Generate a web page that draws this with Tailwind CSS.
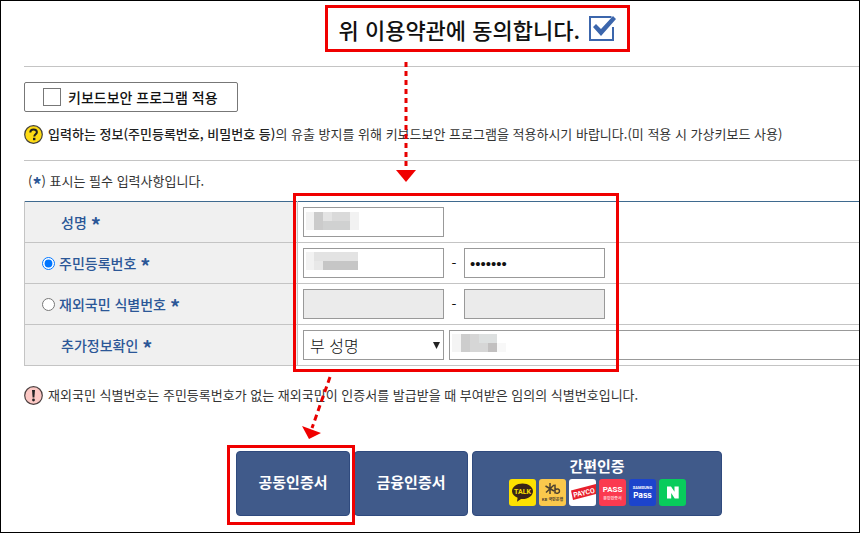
<!DOCTYPE html>
<html lang="ko">
<head>
    <meta charset="UTF-8">
    <meta name="viewport" content="width=device-width, initial-scale=1.0">
    <title>인증서 발급 신청</title>
    <script src="https://cdn.jsdelivr.net/npm/@tailwindcss/browser@4"></script>
    <style>
        body {
            font-family: "Noto Sans CJK KR", "Noto Sans", sans-serif;
        }
    </style>
</head>
<body class="bg-white text-[#333]">
    <div class="min-h-screen border border-black overflow-hidden">
        <form class="relative ml-[23px] -mr-[75px]">
            <!-- Terms agreement -->
            <div class="flex justify-center pt-1 pr-1 pb-[14px] border-b border-[#c4c4c4]">
                <label for="agree" class="flex items-center justify-between w-[305px] h-[47px] px-[11px] border-3 border-[#f00000] text-[22px] leading-8 font-medium text-[#111]">
                    <span>위 이용약관에 동의합니다.</span>
                    <span class="relative w-[27px] h-[26px]">
                        <input type="checkbox" id="agree" checked class="appearance-none block w-[25px] h-[25px] border-2 border-[#3c66ac] bg-white">
                        <svg class="absolute inset-0 pointer-events-none" width="28" height="26" viewBox="0 0 28 26">
                            <path d="M22.500 0h4v11h-4z" fill="#fff"/>
                            <path d="M4 11l3-3 5 5L24 0l3 3-15 17z" fill="#3c66ac"/>
                        </svg>
                    </span>
                </label>
            </div>

            <!-- Keyboard security -->
            <div class="pt-[15px] pb-4 border-b border-[#c4c4c4]">
                <label for="keyboard" class="flex items-center w-[214px] h-[30px] pl-[18px] gap-[7px] border border-[#777] rounded-xs text-sm font-medium text-[#111]">
                    <input type="checkbox" id="keyboard" class="appearance-none w-[18px] h-[18px] border border-[#777] bg-white">
                    키보드보안 프로그램 적용
                </label>
                <p class="flex items-center gap-[5px] mt-3 text-[13px] leading-5">
                    <svg width="19" height="19" viewBox="0 0 19 19" class="shrink-0">
                        <circle cx="9.5" cy="9.5" r="8.8" fill="#ffdc14" stroke="#44403a" stroke-width="1.2"/>
                        <path d="M6.3 7.6c0-2 1.4-3.2 3.3-3.2s3.3 1.100 3.300 2.800c0 2-2.600 2.300-2.600 4.300" fill="none" stroke="#222" stroke-width="2"/>
                        <rect x="9" y="12.800" width="2.400" height="2.400" fill="#222"/>
                    </svg>
                    <span class="whitespace-nowrap"><strong class="font-medium text-[#222]">입력하는 정보(주민등록번호, 비밀번호 등)</strong>의 유출 방지를 위해 키보드보안 프로그램을 적용하시기 바랍니다.(미 적용 시 가상키보드 사용)</span>
                </p>
            </div>

            <p class="pt-[10px] pb-[10px] pl-1 text-[13px] leading-5">(<b class="inline-block h-5 align-top text-lg leading-[26px] text-[#2b5797]">*</b>) 표시는 필수 입력사항입니다.</p>

            <!-- Applicant information -->
            <div class="relative">
                <div class="h-px bg-[#3f6a8f]"></div>
                <table class="w-full -mt-px border-collapse">
                    <tbody>
                        <tr class="h-[41px] border-y border-t-[#3f6a8f] border-b-[#c4c4c4]">
                            <th scope="row" class="w-[273px] pl-9 bg-[#f0f0f0] border-x border-[#c4c4c4] text-left text-sm leading-5 font-medium text-[#2b5797]">
                                <label for="name">성명 <b class="inline-block h-5 align-top text-xl leading-[26px]">*</b></label>
                            </th>
                            <td class="pl-[5px]">
                                <div class="relative flex">
                                    <input type="text" id="name" class="w-[141px] h-[30px] px-1 border border-[#999]">
                                    <svg class="absolute left-[3px] top-[5px]" width="53" height="18" viewBox="0 0 53 18">
                                        <rect width="53" height="18" fill="#f2f2f2"/>
                                        <rect x="8" width="36" height="18" fill="#dadada"/>
                                        <rect x="8" width="9" height="18" fill="#cbcbcb"/>
                                        <rect x="17" width="9" height="9" fill="#e4e4e4"/>
                                        <rect x="17" y="9" width="27" height="9" fill="#d0d1d1"/>
                                    </svg>
                                </div>
                            </td>
                        </tr>
                        <tr class="h-[41px] border-b border-[#c4c4c4]">
                            <th scope="row" class="pl-[17px] bg-[#f0f0f0] border-x border-[#c4c4c4] text-left text-sm leading-5 font-medium text-[#2b5797]">
                                <div class="flex items-center gap-1">
                                    <input type="radio" name="idtype" id="resident" checked class="w-[13px] h-[13px]">
                                    <label for="resident">주민등록번호 <b class="inline-block h-5 align-top text-xl leading-[26px]">*</b></label>
                                </div>
                            </th>
                            <td class="pl-[5px]">
                                <div class="relative flex items-center">
                                    <input type="text" aria-label="주민등록번호 앞자리" class="w-[141px] h-[30px] px-1 border border-[#999]">
                                    <span class="w-5 text-center text-sm text-[#111]">-</span>
                                    <input type="password" aria-label="주민등록번호 뒷자리" value="0000000" class="w-[141px] h-[30px] px-[5px] border border-[#999] font-['Liberation_Sans'] text-[15px] text-[#111]">
                                    <svg class="absolute left-[3px] top-1" width="52" height="18" viewBox="0 0 52 18">
                                        <rect width="52" height="18" fill="#f2f2f2"/>
                                        <rect x="8" width="44" height="9" fill="#e3e3e3"/>
                                        <rect x="8" y="9" width="9" height="9" fill="#e8e8e8"/>
                                        <rect x="17" y="9" width="35" height="9" fill="#c6c6c6"/>
                                    </svg>
                                </div>
                            </td>
                        </tr>
                        <tr class="h-[41px] border-b border-[#c4c4c4]">
                            <th scope="row" class="pl-[17px] bg-[#f0f0f0] border-x border-[#c4c4c4] text-left text-sm leading-5 font-medium text-[#2b5797]">
                                <div class="flex items-center gap-1">
                                    <input type="radio" name="idtype" id="overseas" class="w-[13px] h-[13px]">
                                    <label for="overseas">재외국민 식별번호 <b class="inline-block h-5 align-top text-xl leading-[26px]">*</b></label>
                                </div>
                            </th>
                            <td class="pl-[5px]">
                                <div class="flex items-center">
                                    <input type="text" aria-label="식별번호 앞자리" disabled class="w-[141px] h-[30px] border border-[#999] bg-[#ebebeb]">
                                    <span class="w-5 text-center text-sm text-[#111]">-</span>
                                    <input type="password" aria-label="식별번호 뒷자리" disabled class="w-[141px] h-[30px] border border-[#999] bg-[#ebebeb]">
                                </div>
                            </td>
                        </tr>
                        <tr class="h-[41px] border-b border-[#c4c4c4]">
                            <th scope="row" class="pl-9 bg-[#f0f0f0] border-x border-[#c4c4c4] text-left text-sm leading-5 font-medium text-[#2b5797]">
                                <label for="extra">추가정보확인 <b class="inline-block h-5 align-top text-xl leading-[26px]">*</b></label>
                            </th>
                            <td class="pl-[5px]">
                                <div class="relative flex gap-[5px]">
                                    <select id="extra" class="appearance-none w-[141px] h-[30px] px-[6px] border border-[#999] bg-white text-base leading-6 font-light text-[#111]">
                                        <option>부 성명</option>
                                        <option>모 성명</option>
                                    </select>
                                    <svg class="absolute left-[130px] top-3 pointer-events-none" width="7" height="7" viewBox="0 0 7 7">
                                        <path d="M0 0h7L3.500 7z" fill="#222"/>
                                    </svg>
                                    <input type="text" aria-label="추가정보" class="grow h-[30px] border border-[#999]">
                                    <svg class="absolute left-[149px] top-1" width="54" height="18" viewBox="0 0 54 18">
                                        <rect width="45" height="18" fill="#f4f4f4"/>
                                        <rect x="9" width="36" height="18" fill="#d6d6d6"/>
                                        <rect x="9" width="9" height="18" fill="#cdcdcd"/>
                                        <rect x="27" width="18" height="9" fill="#dde0e0"/>
                                        <rect x="36" y="9" width="9" height="9" fill="#c2c0c0"/>
                                        <rect x="45" y="9" width="9" height="9" fill="#f8f8f8"/>
                                    </svg>
                                </div>
                            </td>
                        </tr>
                    </tbody>
                </table>
                <div class="absolute left-[269px] -top-2 w-[326px] h-[179px] border-3 border-[#f00000] pointer-events-none"></div>
            </div>

            <p class="flex items-center gap-[5px] mt-[19px] text-[13px] leading-5 whitespace-nowrap">
                <svg width="19" height="19" viewBox="0 0 19 19" class="shrink-0">
                    <circle cx="9.5" cy="9.5" r="8.8" fill="#fcc8c4" stroke="#4c4040" stroke-width="1.2"/>
                    <path d="M8 4h3l-.6 7.500H8.600z" fill="#222"/>
                    <circle cx="9.5" cy="14" r="1.400" fill="#222"/>
                </svg>
                재외국민 식별번호는 주민등록번호가 없는 재외국민이 인증서를 발급받을 때 부여받은 임의의 식별번호입니다.
            </p>

            <!-- Certificate buttons -->
            <div class="flex justify-center gap-1 mt-[46px] pb-4 text-[15px] leading-5 font-bold text-white">
                <div class="relative">
                    <button type="button" class="w-[114px] h-[65px] pb-1 border border-[#2f4a7e] rounded-sm bg-[#405a8a]">공동인증서</button>
                    <div class="absolute -left-[9px] -top-[6px] z-10 w-[128px] h-20 border-3 border-[#f00000] pointer-events-none"></div>
                </div>
                <button type="button" class="w-[114px] h-[65px] pb-1 border border-[#2f4a7e] rounded-sm bg-[#405a8a]">금융인증서</button>
                <button type="button" class="flex flex-col items-center w-[250px] h-[65px] pt-1 gap-[3px] border border-[#2f4a7e] rounded-sm bg-[#405a8a]">
                    간편인증
                    <span class="flex gap-[3px]">
                        <svg width="27" height="27" viewBox="0 0 27 27">
                            <rect width="27" height="27" rx="3" fill="#fce000"/>
                            <path d="M13.500 4.500c5.800 0 10.500 3.400 10.500 7.800s-4.700 7.800-10.500 7.800l-1.500-.1-4 2.800 .6-4C5.200 17.500 3 15 3 12.300c0-4.400 4.700-7.800 10.500-7.800z" fill="#3a2418"/>
                            <text x="13.500" y="15" text-anchor="middle" font-family="Roboto" font-weight="bold" font-size="7" fill="#fce000">TALK</text>
                        </svg>
                        <svg width="27" height="27" viewBox="0 0 27 27">
                            <rect width="27" height="27" rx="3" fill="#fac84c"/>
                            <path d="M11 4v11M6.500 7l8.500 5M7 13.500L15 6M16 5.500v9M16 11c2-2 4.500-1 4.500 1s-2.500 3.200-4.500 1.500" fill="none" stroke="#4c4030" stroke-width="1.500"/>
                            <text x="13.500" y="22" text-anchor="middle" font-family="Noto Sans CJK KR" font-weight="bold" font-size="4" fill="#4c4030">KB 국민은행</text>
                        </svg>
                        <svg width="27" height="27" viewBox="0 0 27 27">
                            <rect width="27" height="27" rx="3" fill="#fff"/>
                            <path d="M2 11.500L27 5v10L4 21z" fill="#e8202c"/>
                            <text x="5" y="18.500" transform="rotate(-13 5 18.500)" font-family="Roboto" font-weight="bold" font-size="7" fill="#fff">PAYCO</text>
                        </svg>
                        <svg width="27" height="27" viewBox="0 0 27 27">
                            <rect width="27" height="27" rx="3" fill="#fb3a50"/>
                            <text x="13.500" y="13" text-anchor="middle" font-family="Roboto" font-weight="bold" font-size="8" fill="#fff">PASS</text>
                            <text x="13.500" y="21" text-anchor="middle" font-family="Noto Sans CJK KR" font-size="4" fill="#ffd0d4">본인인증서</text>
                        </svg>
                        <svg width="27" height="27" viewBox="0 0 27 27">
                            <rect width="27" height="27" rx="3" fill="#1c44cc"/>
                            <text x="13.500" y="10" text-anchor="middle" font-family="Roboto" font-weight="bold" font-size="4" fill="#fff">SAMSUNG</text>
                            <text x="13.500" y="18.500" text-anchor="middle" font-family="Inter" font-weight="bold" font-size="8" fill="#fff">Pass</text>
                        </svg>
                        <svg width="27" height="27" viewBox="0 0 27 27">
                            <rect width="27" height="27" rx="3" fill="#08cc5c"/>
                            <path d="M8 7.500h4l3.500 5.200V7.500h4.200v12h-4L12.200 14v5.500H8z" fill="#fff"/>
                        </svg>
                    </span>
                </button>
            </div>

            <!-- Guide arrows -->
            <svg class="absolute left-0 top-0 z-10 pointer-events-none" width="600" height="440" viewBox="0 0 600 440">
                <path d="M382 61V170" stroke="#e80000" stroke-width="3" stroke-dasharray="5 4"/>
                <path d="M372 169h20l-10 12z" fill="#f00000"/>
                <path d="M306 376L288 427" stroke="#e80000" stroke-width="3" stroke-dasharray="6 4"/>
                <path d="M278 425l19 7-12 6z" fill="#f00000"/>
            </svg>
        </form>
    </div>
</body>
</html>
